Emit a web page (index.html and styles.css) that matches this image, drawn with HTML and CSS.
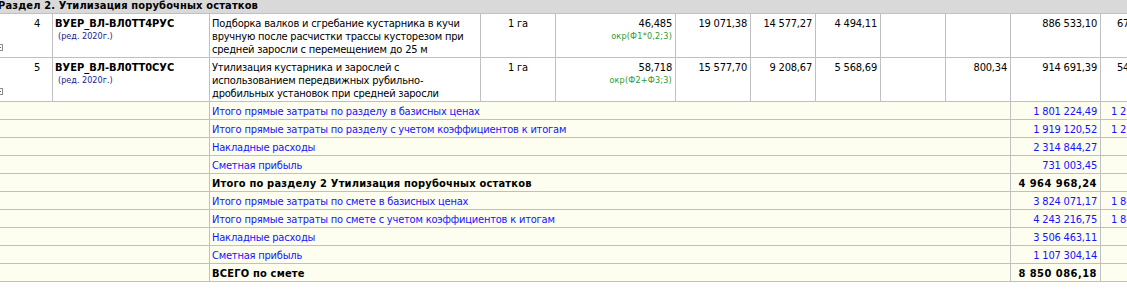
FILE: index.html
```html
<!DOCTYPE html>
<html lang="ru">
<head>
<meta charset="utf-8">
<title>Смета</title>
<link rel="stylesheet" href="styles.css">
</head>
<body>
<div class="sheet">
  <div class="section">Раздел 2. Утилизация порубочных остатков</div>

  <div class="c num">4<span class="toggle"></span></div>
  <div class="c code"><b>ВУЕР_ВЛ-ВЛ0ТТ4РУС</b><span class="ed">(ред. 2020г.)</span></div>
  <div class="c name">Подборка валков и сгребание кустарника в кучи<br>вручную после расчистки трассы кусторезом при<br>средней заросли с перемещением до 25 м</div>
  <div class="c unit">1 га</div>
  <div class="c qty">46,485<span class="formula">окр(Ф1*0,2;3)</span></div>
  <div class="c r">19 071,38</div>
  <div class="c r">14 577,27</div>
  <div class="c r">4 494,11</div>
  <div class="c r"></div>
  <div class="c r"></div>
  <div class="c r">886 533,10</div>
  <div class="c cut">67 0</div>

  <div class="c num">5<span class="toggle"></span></div>
  <div class="c code"><b>ВУЕР_ВЛ-ВЛ0ТТ0СУС</b><span class="ed">(ред. 2020г.)</span></div>
  <div class="c name">Утилизация кустарника и зарослей с<br>использованием передвижных рубильно-<br>дробильных установок при средней заросли</div>
  <div class="c unit">1 га</div>
  <div class="c qty">58,718<span class="formula">окр(Ф2+Ф3;3)</span></div>
  <div class="c r">15 577,70</div>
  <div class="c r">9 208,67</div>
  <div class="c r">5 568,69</div>
  <div class="c r"></div>
  <div class="c r">800,34</div>
  <div class="c r">914 691,39</div>
  <div class="c cut">54 0</div>

  <div class="s lead"></div><div class="s label">Итого прямые затраты по разделу в базисных ценах</div><div class="s val">1 801 224,49</div><div class="s extra">1 21</div>
  <div class="s lead"></div><div class="s label">Итого прямые затраты по разделу с учетом коэффициентов к итогам</div><div class="s val">1 919 120,52</div><div class="s extra">1 21</div>
  <div class="s lead"></div><div class="s label">Накладные расходы</div><div class="s val">2 314 844,27</div><div class="s extra"></div>
  <div class="s lead"></div><div class="s label">Сметная прибыль</div><div class="s val">731 003,45</div><div class="s extra"></div>
  <div class="s lead"></div><div class="s label total">Итого по разделу 2 Утилизация порубочных остатков</div><div class="s val total">4 964 968,24</div><div class="s extra"></div>
  <div class="s lead"></div><div class="s label">Итого прямые затраты по смете в базисных ценах</div><div class="s val">3 824 071,17</div><div class="s extra">1 84</div>
  <div class="s lead"></div><div class="s label">Итого прямые затраты по смете с учетом коэффициентов к итогам</div><div class="s val">4 243 216,75</div><div class="s extra">1 84</div>
  <div class="s lead"></div><div class="s label">Накладные расходы</div><div class="s val">3 506 463,11</div><div class="s extra"></div>
  <div class="s lead"></div><div class="s label">Сметная прибыль</div><div class="s val">1 107 304,14</div><div class="s extra"></div>
  <div class="s lead"></div><div class="s label total">ВСЕГО по смете</div><div class="s val total">8 850 086,18</div><div class="s extra"></div>
</div>
</body>
</html>
```
FILE: styles.css
```css
html, body {
  margin: 0;
  padding: 0;
  background: #ffffff;
  overflow: hidden;
}

.sheet {
  width: 1127px;
  overflow: hidden;
  display: grid;
  grid-template-columns: 53px 157px 271px 75px 120px 75px 65px 65px 65px 65px 90px 80px;
  font-family: "DejaVu Sans Condensed", "Liberation Sans", sans-serif;
  font-size: 11px;
  line-height: 13px;
  letter-spacing: -0.2px;
  color: #000000;
}

.section {
  grid-column: 1 / -1;
  height: 14px;
  box-sizing: border-box;
  background: #d9d9d9;
  border-bottom: 1px solid #c0c0c0;
  font-weight: bold;
  line-height: 12px;
  letter-spacing: 0.15px;
  text-indent: -2px;
  white-space: nowrap;
}

.c {
  position: relative;
  height: 44px;
  box-sizing: border-box;
  border-right: 1px solid #c0c0c0;
  border-bottom: 1px solid #c0c0c0;
  background: #ffffff;
  padding: 3px 3px 0 3px;
  white-space: nowrap;
}

.num {
  text-align: right;
  padding-right: 12px;
}

.toggle {
  position: absolute;
  left: -5px;
  top: 30px;
  width: 8px;
  height: 7px;
  box-sizing: border-box;
  border: 1px solid #8c8c8c;
  background: #ffffff;
}

.toggle::after {
  content: "";
  position: absolute;
  left: 1px;
  right: 1px;
  top: 2px;
  height: 1px;
  background: #6a6a6a;
}

.code {
  display: flex;
  flex-direction: column;
  padding-left: 2px;
}

.code b {
  letter-spacing: 0;
}

.ed {
  font-size: 9px;
  line-height: 12px;
  letter-spacing: 0;
  color: #1c1c8a;
  padding-left: 3px;
}

.name {
  padding-left: 2px;
}

.unit {
  text-align: center;
}

.qty {
  display: flex;
  flex-direction: column;
  align-items: flex-end;
}

.formula {
  font-size: 9px;
  line-height: 12px;
  letter-spacing: 0.2px;
  color: #2f9a2f;
}

.r {
  text-align: right;
}

.cut {
  padding-left: 16px;
  overflow: hidden;
}

.s {
  height: 18px;
  box-sizing: border-box;
  background: #fefef0;
  border-bottom: 1px solid #c0c0c0;
  border-right: 1px solid #c0c0c0;
  padding: 3px 3px 0 3px;
  white-space: nowrap;
  color: #1414ff;
}

.lead {
  grid-column: 1 / 3;
}

.label {
  grid-column: 3 / 11;
  padding-left: 2px;
}

.val {
  text-align: right;
}

.extra {
  padding-left: 10px;
  overflow: hidden;
}

.total {
  color: #000000;
  font-weight: bold;
  letter-spacing: 0.2px;
}

.val.total {
  letter-spacing: 0.5px;
}
```
